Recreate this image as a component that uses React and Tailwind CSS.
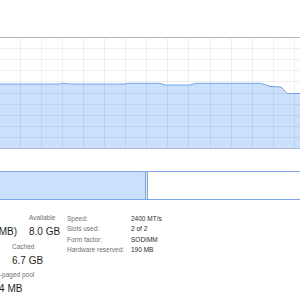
const vLines = [20, 41, 62, 83, 104, 125, 146, 167, 188, 210, 231, 252, 273, 294];
const hLines = [10, 21, 32, 43, 55, 66, 77, 88, 99];

const curve = [
  [0, 46], [60, 46], [63, 45.3], [70, 46], [125, 46], [128, 45.3], [160, 45.3],
  [165, 47], [190, 47], [196, 45.3], [260, 45.3], [265, 46.5], [270, 48.5],
  [281, 49], [287, 55.5], [300, 55.5],
];

function MemoryChart() {
  const line = curve.map(([x, y], i) => `${i ? 'L' : 'M'}${x} ${y}`).join(' ');
  const area = `${line} L300 110 L0 110 Z`;
  return (
    <svg width="300" height="110" viewBox="0 0 300 110" className="block">
      <path d={area} fill="#cbe0fc" />
      {vLines.map((x) => (
        <rect key={x} x={x} y="0" width="1" height="110" fill="#000" fillOpacity="0.06" />
      ))}
      {hLines.map((y) => (
        <rect key={y} x="0" y={y} width="300" height="1" fill="#000" fillOpacity="0.06" />
      ))}
      <path d={line} fill="none" stroke="#74a3ec" strokeWidth="1" />
    </svg>
  );
}

function Stat({ label, value, tight }) {
  return (
    <div className="whitespace-nowrap">
      <div className={`text-[#707070] leading-[8px] ${tight ? 'text-[5.5px]' : 'text-[6.5px]'}`}>{label}</div>
      <div className="mt-[4px] text-[10px] leading-[12px] text-[#1f1f1f]">{value}</div>
    </div>
  );
}

export default function App() {
  const specs = [
    ['Speed:', '2400 MT/s'],
    ['Slots used:', '2 of 2'],
    ['Form factor:', 'SODIMM'],
    ['Hardware reserved:', '190 MB'],
  ];
  return (
    <div className="w-[300px] h-[300px] overflow-hidden bg-white pt-[37px]" style={{ fontFamily: '"Liberation Sans", Arial, sans-serif' }}>
      <div className="h-[112px] border-t border-b border-t-[#b6b6b6] border-b-[#a9b8cb]">
        <MemoryChart />
      </div>

      <div className="mt-[22px] ml-[-10px] w-[330px] h-[29px] border border-[#7ba7ea] flex">
        <div className="w-[155px] bg-[#cbe0fc] border-r border-[#7ba7ea]" />
        <div className="w-[2px] bg-[#e3eefd] border-r border-[#7ba7ea]" />
        <div className="flex-1 bg-white" />
      </div>

      <div className="mt-[14px] flex items-start">
        <div className="w-[67px] flex flex-col gap-[4.5px]">
          <div className="flex">
            <div className="w-[29px] flex justify-end pr-[12px] shrink-0">
              <Stat label="In use (Compressed)" value="7.6 GB (327 MB)" tight />
            </div>
            <Stat label="Available" value="8.0 GB" />
          </div>
          <div className="flex">
            <div className="w-[6px] flex justify-end pr-[12px] shrink-0">
              <Stat label="Committed" value="11.2/18.2 GB" />
            </div>
            <Stat label="Cached" value="6.7 GB" />
          </div>
          <div className="flex">
            <div className="shrink-0 ml-[-12px]">
              <Stat label="Non-paged pool" value="584 MB" />
            </div>
          </div>
        </div>
        <div className="self-start content-start mt-[-0.5px] grid grid-cols-[64px_auto] text-[6.5px] leading-[10.5px]">
          {specs.map(([k, v]) => (
            <div key={k} className="contents">
              <div className="text-[#707070] whitespace-nowrap">{k}</div>
              <div className="text-[#2a2a2a] whitespace-nowrap">{v}</div>
            </div>
          ))}
        </div>
      </div>
    </div>
  );
}
